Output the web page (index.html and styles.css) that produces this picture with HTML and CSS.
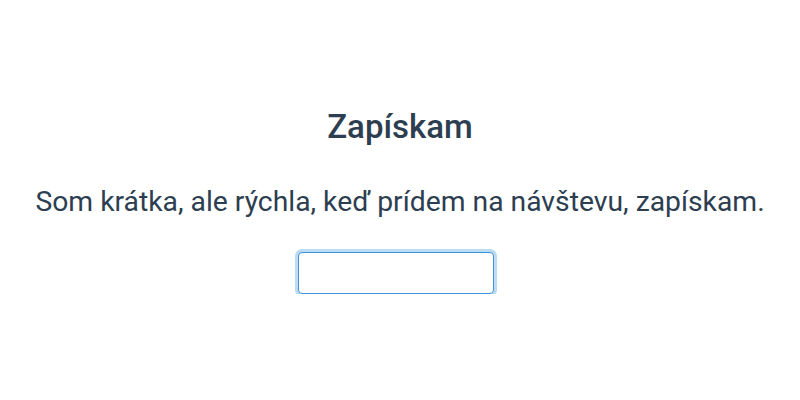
FILE: index.html
```html
<!DOCTYPE html>
<html lang="sk">
  <head>
    <meta charset="UTF-8" />
    <title>Zapískam</title>
    <link rel="stylesheet" href="styles.css">
  </head>
  <body>
    <div id="app">
      <!-- Nadpis -->
      <h1 class="title">Zapískam</h1>

      <!-- Popis -->
      <p class="lead">Som krátka, ale rýchla, keď prídem na návštevu, zapískam.</p>

      <!-- Vstup -->
      <input type="text" class="name-input" autofocus>
    </div>
  </body>
</html>
```

FILE: styles.css
```css
body {
  margin: 0;
  background: #ffffff;
  font-family: Roboto, "Noto Sans", sans-serif;
  color: #2c3e50;
}

#app {
  display: flex;
  flex-direction: column;
  align-items: center;
  padding-top: 105px;
  text-align: center;
}

.title {
  margin: 0;
  font-size: 33px;
  font-weight: 500;
  line-height: 44px;
}

.lead {
  margin: 35px 0 0;
  font-size: 28.3px;
  font-weight: 400;
  line-height: 36px;
}

.name-input {
  margin: 32px 8px 0 0;
  width: 196px;
  height: 42px;
  box-sizing: border-box;
  border: 1px solid #3d93dd;
  border-radius: 4px;
  box-shadow: 0 0 0 3px #bcdcf5;
  outline: none;
  font-size: 18px;
  padding: 0 10px;
}
```
